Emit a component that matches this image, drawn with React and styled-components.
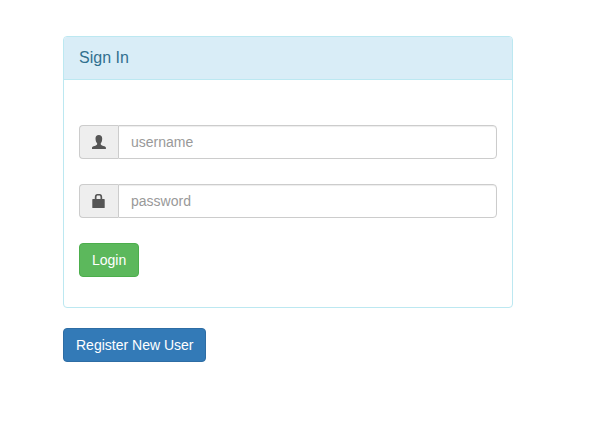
import React from 'react';
import styled, { createGlobalStyle } from 'styled-components';

const Global = createGlobalStyle`
  html, body { margin: 0; padding: 0; background: #fff; }
  * { box-sizing: border-box; }
  body { font-family: "Liberation Sans", Arial, sans-serif; font-size: 14px; line-height: 20px; color: #333; }
`;
const Page = styled.div`
  width: 450px;
  margin: 36px 0 0 63px;
`;
const Panel = styled.div`
  border: 1px solid #bce8f1;
  border-radius: 4px;
  margin-bottom: 20px;
  height: 272px;
`;
const PanelHeading = styled.div`
  background: #d9edf7;
  border-bottom: 1px solid #bce8f1;
  border-radius: 3px 3px 0 0;
  color: #31708f;
  padding: 11px 15px 10px;
  height: 43px;
`;
const PanelTitle = styled.h3`
  margin: 0;
  font-size: 16px;
  font-weight: 400;
  line-height: 20px;
  color: inherit;
`;
const PanelBody = styled.div`
  padding: 45px 15px 15px;
`;
const InputGroup = styled.div`
  display: flex;
  height: 34px;
  margin-bottom: 25px;
`;
const Addon = styled.span`
  width: 39px;
  display: flex;
  align-items: center;
  justify-content: center;
  background: #eee;
  border: 1px solid #ccc;
  border-right: 0;
  border-radius: 4px 0 0 4px;
  color: #555;
`;
const Input = styled.input`
  flex: 1;
  min-width: 0;
  height: 34px;
  padding: 6px 12px;
  border: 1px solid #ccc;
  border-radius: 0 4px 4px 0;
  box-shadow: inset 0 1px 1px rgba(0,0,0,.075);
  font: inherit;
  color: #555;
  outline: none;
  &::placeholder { color: #999; opacity: 1; }
`;
const Button = styled.button`
  display: inline-block;
  height: 34px;
  padding: 6px 12px;
  font: inherit;
  color: #fff;
  border: 1px solid ${p => p.$border};
  background: ${p => p.$bg};
  border-radius: 4px;
`;

const UserIcon = () => (
  <svg width="14" height="14" viewBox="0 0 14 14" fill="#555">
    <path d="M6.800 0C9 0 10.200 1.400 10.200 3.600c0 2-.6 4-1.500 5 0 1 .3 1.500 1.300 1.900 1.800.6 3.400 1 3.900 2V14H0v-1.500c.5-1 2.100-1.400 3.900-2 1-.4 1.300-.9 1.300-1.900-.9-1-1.700-3-1.700-5C3.500 1.400 4.600 0 6.800 0z" />
  </svg>
);
const LockIcon = () => (
  <svg width="14" height="14" viewBox="0 0 14 14" fill="#555">
    <path fillRule="evenodd" d="M2.800 5V3.200C2.800 1.200 4 0 5.200 0h2.600c1.200 0 2.400 1.200 2.400 3.200V5h1.900c.4 0 .6.200.6.600v7.800c0 .4-.2.600-.6.600H.9c-.4 0-.6-.2-.6-.6V5.600C.3 5.200.5 5 .9 5zm1.700 0h4V3.200c0-1-.5-1.600-1.200-1.600H5.700c-.7 0-1.200.6-1.200 1.600z" />
  </svg>
);

export default function App() {
  return (
    <>
      <Global />
      <Page>
        <Panel>
          <PanelHeading><PanelTitle>Sign In</PanelTitle></PanelHeading>
          <PanelBody>
            <InputGroup>
              <Addon><UserIcon /></Addon>
              <Input placeholder="username" />
            </InputGroup>
            <InputGroup>
              <Addon><LockIcon /></Addon>
              <Input placeholder="password" />
            </InputGroup>
            <Button $bg="#5cb85c" $border="#4cae4c">Login</Button>
          </PanelBody>
        </Panel>
        <Button $bg="#337ab7" $border="#2e6da4">Register New User</Button>
      </Page>
    </>
  );
}
